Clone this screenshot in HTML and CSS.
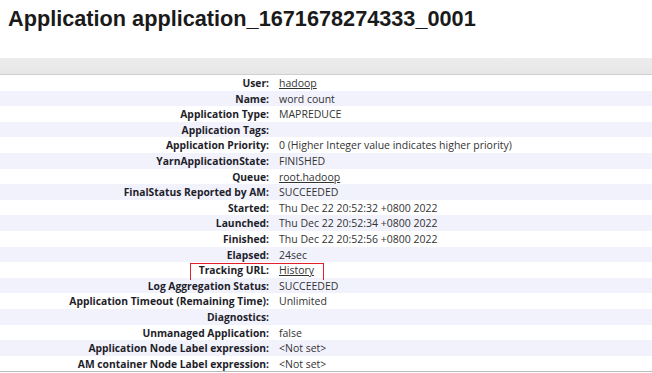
FILE: index.html
```html
<!DOCTYPE html>
<html lang="en">
<head>
  <meta charset="UTF-8" />
  <title>Application application_1671678274333_0001</title>
  <link rel="stylesheet" href="styles.css">
</head>
<body>
  <h1>Application application_1671678274333_0001</h1>

  <div class="toolbar"></div>

  <table class="info">
    <tbody>
      <tr><th>User:</th><td><a href="#">hadoop</a></td></tr>
      <tr><th>Name:</th><td>word count</td></tr>
      <tr><th>Application Type:</th><td>MAPREDUCE</td></tr>
      <tr><th>Application Tags:</th><td></td></tr>
      <tr><th>Application Priority:</th><td>0 (Higher Integer value indicates higher priority)</td></tr>
      <tr><th>YarnApplicationState:</th><td>FINISHED</td></tr>
      <tr><th>Queue:</th><td><a href="#">root.hadoop</a></td></tr>
      <tr><th>FinalStatus Reported by AM:</th><td>SUCCEEDED</td></tr>
      <tr><th>Started:</th><td>Thu Dec 22 20:52:32 +0800 2022</td></tr>
      <tr><th>Launched:</th><td>Thu Dec 22 20:52:34 +0800 2022</td></tr>
      <tr><th>Finished:</th><td>Thu Dec 22 20:52:56 +0800 2022</td></tr>
      <tr><th>Elapsed:</th><td>24sec</td></tr>
      <tr class="tracking"><th>Tracking URL:</th><td><a href="#">History</a><span class="mark"></span></td></tr>
      <tr><th>Log Aggregation Status:</th><td>SUCCEEDED</td></tr>
      <tr><th>Application Timeout (Remaining Time):</th><td>Unlimited</td></tr>
      <tr><th>Diagnostics:</th><td></td></tr>
      <tr><th>Unmanaged Application:</th><td>false</td></tr>
      <tr><th>Application Node Label expression:</th><td>&lt;Not set&gt;</td></tr>
      <tr><th>AM container Node Label expression:</th><td>&lt;Not set&gt;</td></tr>
    </tbody>
  </table>
</body>
</html>
```

FILE: styles.css
```css
body {
  margin: 0;
  font-family: "Open Sans", sans-serif;
  color: #222;
  background: #fff;
}
h1 {
  font-family: "Liberation Sans", sans-serif;
  font-weight: bold;
  font-size: 21.7px;
  line-height: 26px;
  margin: 0;
  padding: 6px 8px 0;
  height: 58px;
  box-sizing: border-box;
  color: #1a1a1a;
}
.toolbar {
  height: 16px;
  background: linear-gradient(#ededed, #e6e6e6);
  border-bottom: 1px solid #cfcfcf;
}
table.info {
  width: 100%;
  border-collapse: collapse;
  border-bottom: 1px solid #bbb;
}
table.info tr {
  height: 15.6px;
}
table.info tr:nth-child(even) {
  background: #f2f2fd;
}
table.info th {
  width: 269px;
  padding: 1px 10px 0 0;
  text-align: right;
  font-size: 10.3px;
  font-weight: bold;
  color: #1e1e2a;
  white-space: nowrap;
  line-height: 14.5px;
}
table.info td {
  padding: 1px 0 0;
  font-size: 10.5px;
  color: #333;
  line-height: 14.5px;
  white-space: nowrap;
}
table.info a {
  color: #333;
}
.tracking td {
  position: relative;
}
.mark {
  position: absolute;
  left: -89px;
  top: 1px;
  width: 132px;
  height: 16px;
  border: 1px solid #e0202a;
  border-bottom: none;
}
```
